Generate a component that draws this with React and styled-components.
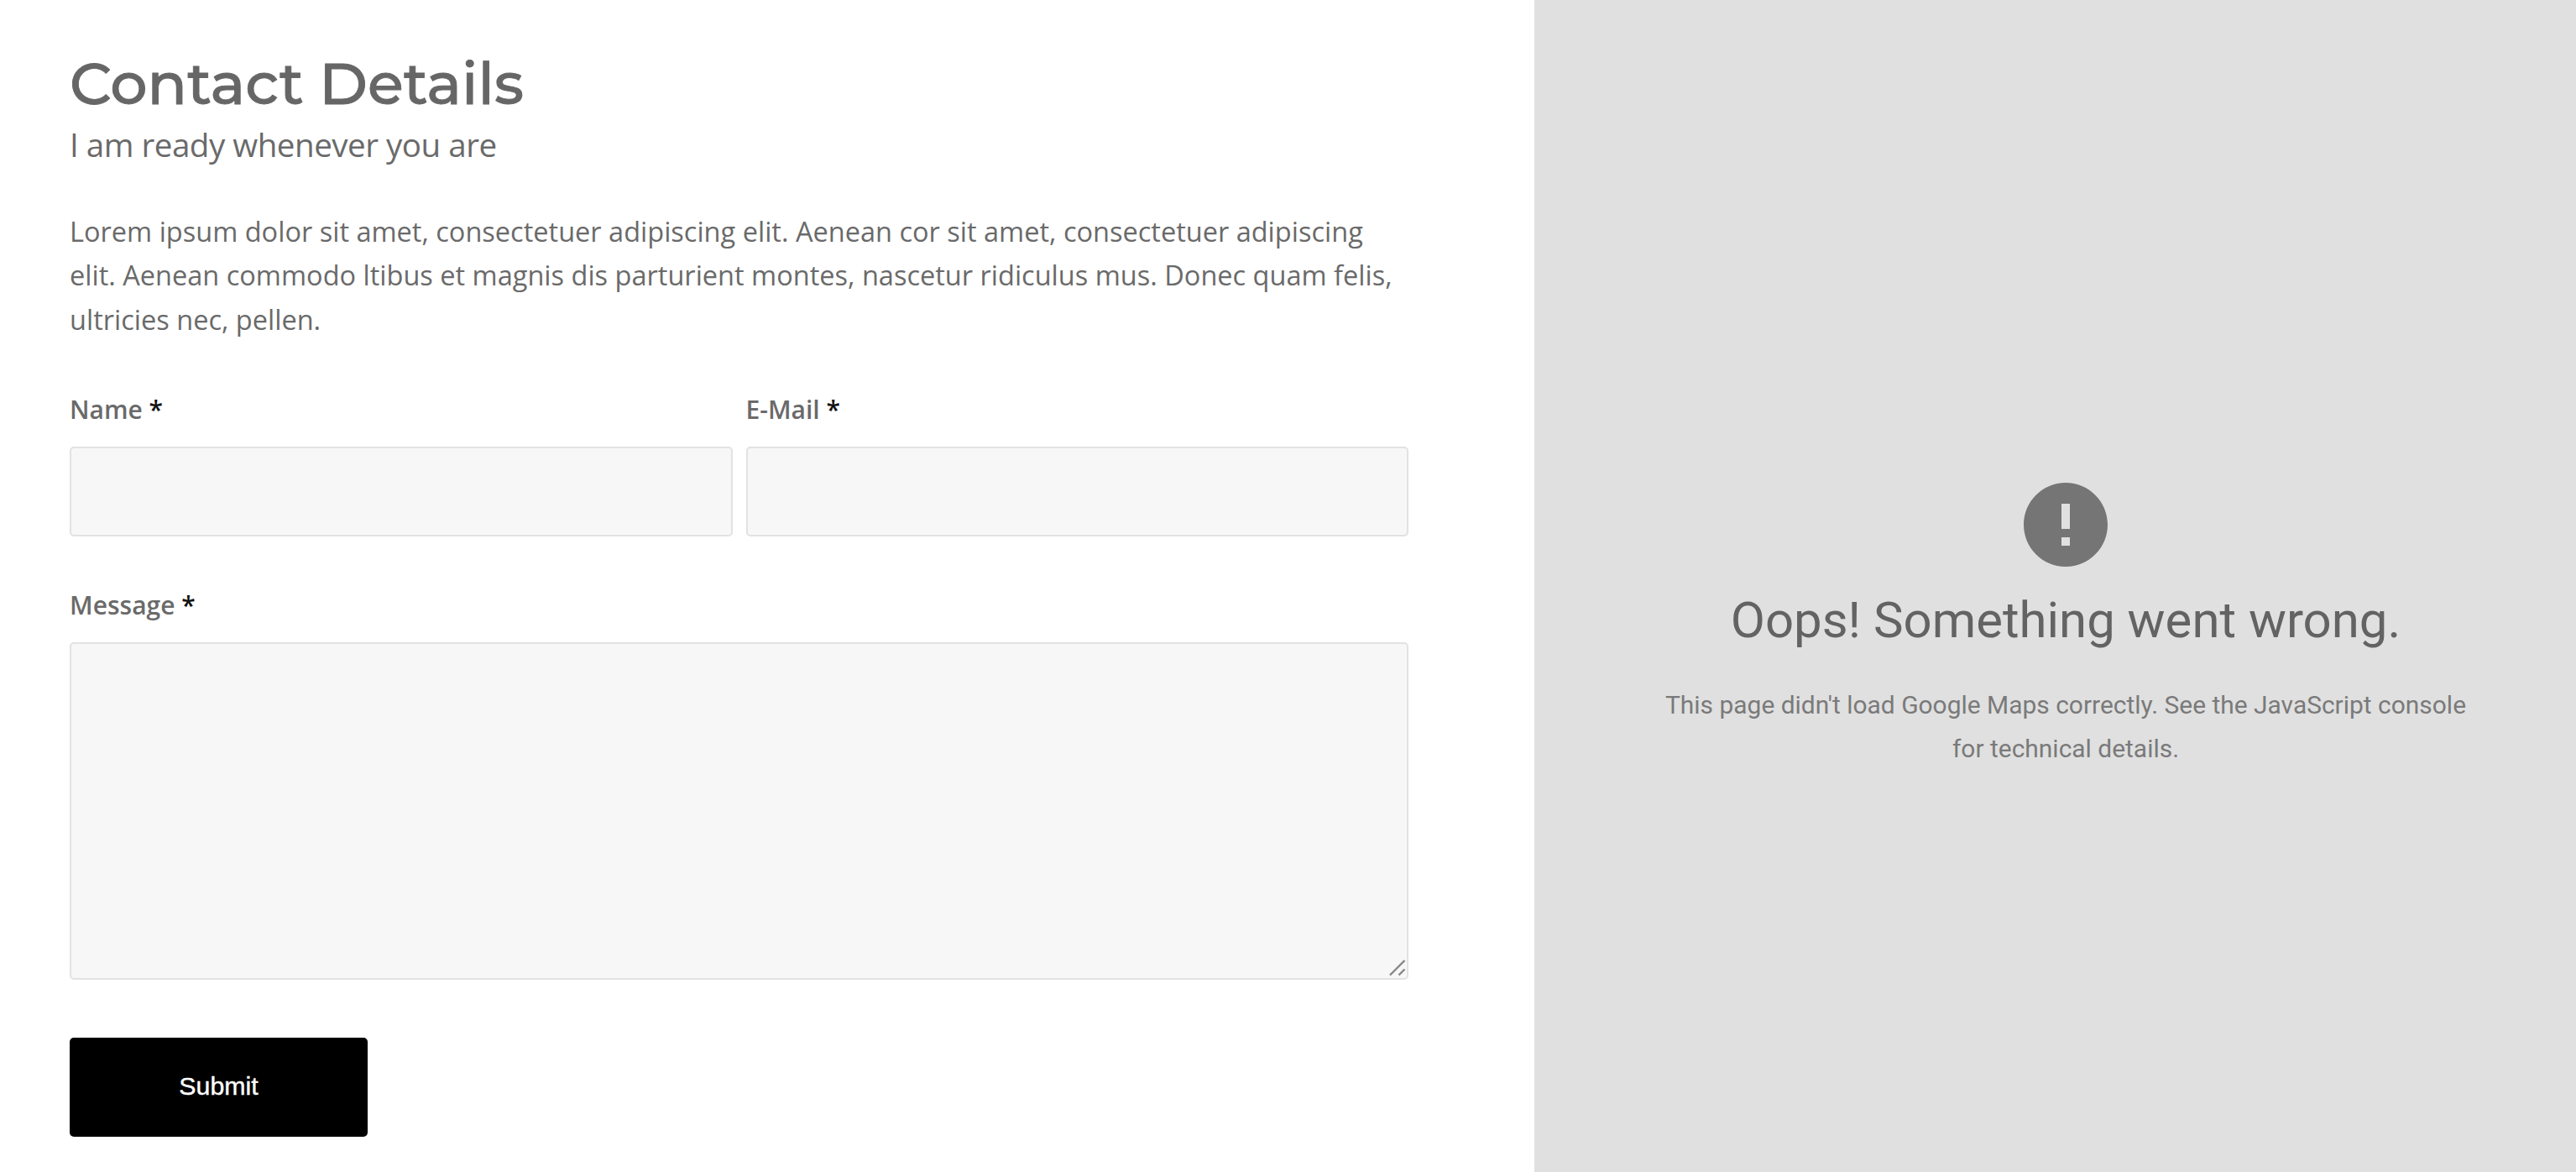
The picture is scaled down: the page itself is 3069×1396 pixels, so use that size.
import React from 'react'
import styled, { createGlobalStyle } from 'styled-components'
import { MdError } from 'react-icons/md'

const GlobalStyle = createGlobalStyle`
  * {
    box-sizing: border-box;
  }

  body {
    margin: 0;
    background: #ffffff;
    color: #6a6a6a;
    font-family: "Open Sans", sans-serif;
  }
`

const MainDiv = styled.div`
  display: flex;
  height: 1396px;
  overflow: hidden;
`

const Details = styled.section`
  width: 1828px;
  flex-shrink: 0;
  padding: 54px 150px 0 83px;
`

const Title = styled.h2`
  color: #666666;
  font-family: Montserrat, sans-serif;
  font-size: 69.8px;
  font-weight: 500;
  line-height: 90px;
  margin: 0;
  -webkit-text-stroke: .9px #666666;
`

const Subtitle = styled.p`
  font-size: 38.6px;
  letter-spacing: -.5px;
  line-height: 57px;
  margin: 0;
`

const Description = styled.p`
  font-size: 32.52px;
  line-height: 52.4px;
  margin: 49px 0 59px;
`

const Form = styled.form`
  display: grid;
  grid-template-columns: 1fr 1fr;
  gap: 60px 16px;
`

const Field = styled.label`
  display: flex;
  flex-direction: column;
  grid-column: ${({ $wide }) => ($wide ? '1 / -1' : 'auto')};
`

const Label = styled.span`
  font-size: 30px;
  font-weight: 600;
  line-height: 44px;
  margin-bottom: 22px;
`

const Required = styled.span`
  color: #111111;
`

const Input = styled.input`
  display: block;
  width: 100%;
  height: 107px;
  padding: 0 24px;
  background: #f7f7f7;
  border: 2px solid #e2e2e2;
  border-radius: 5px;
  font: inherit;
  font-size: 30px;
  outline: none;
`

const TextareaWrap = styled.span`
  display: block;
  position: relative;
`

const Textarea = styled(Input)`
  height: 402px;
  padding: 24px;
  resize: none;
`

const Grip = styled.svg`
  position: absolute;
  right: 3px;
  bottom: 4px;
  width: 20px;
  height: 20px;
`

const SubmitButton = styled.button`
  width: 355px;
  height: 118px;
  margin-top: 9px;
  padding: 0 0 3px;
  background: #000000;
  border: none;
  border-radius: 5px;
  color: #ffffff;
  font-family: "Liberation Sans", Arial, sans-serif;
  font-size: 30.3px;
  -webkit-text-stroke: .4px #ffffff;
`

const MapError = styled.section`
  flex: 1;
  display: flex;
  flex-direction: column;
  align-items: center;
  padding: 565px 0 0 25px;
  background: #e0e0e0;
  color: #7a7a7a;
  font-family: Roboto, sans-serif;
  text-align: center;
`

const ErrorIcon = styled(MdError)`
  width: 120px;
  height: 120px;
  color: #757575;
`

const ErrorTitle = styled.h3`
  color: #636363;
  font-size: 59.9px;
  font-weight: 400;
  line-height: 70px;
  margin: 19px 0 40px;
`

const ErrorText = styled.p`
  width: 980px;
  font-size: 29.95px;
  line-height: 52px;
  margin: 0;
`

export default function Contact() {
  return (
    <MainDiv>
      <GlobalStyle />

      <Details>
        <Title>Contact Details</Title>
        <Subtitle>I am ready whenever you are</Subtitle>
        <Description>
          Lorem ipsum dolor sit amet, consectetuer adipiscing elit. Aenean cor sit amet, consectetuer adipiscing elit. Aenean commodo ltibus et magnis dis parturient montes, nascetur ridiculus mus. Donec quam felis, ultricies nec, pellen.
        </Description>

        <Form>
          <Field>
            <Label>Name <Required>*</Required></Label>
            <Input type="text" />
          </Field>

          <Field>
            <Label>E-Mail <Required>*</Required></Label>
            <Input type="email" />
          </Field>

          <Field $wide>
            <Label>Message <Required>*</Required></Label>
            <TextareaWrap>
              <Textarea as="textarea" />
              <Grip viewBox="0 0 20 20" fill="none" stroke="#858585" strokeWidth="2.4">
                <path d="M1 18.5 L18.5 1 M11.5 18.5 L18.5 11.5" />
              </Grip>
            </TextareaWrap>
          </Field>

          <SubmitButton type="button">Submit</SubmitButton>
        </Form>
      </Details>

      <MapError>
        <ErrorIcon />
        <ErrorTitle>Oops! Something went wrong.</ErrorTitle>
        <ErrorText>
          This page didn't load Google Maps correctly. See the JavaScript console for technical details.
        </ErrorText>
      </MapError>
    </MainDiv>
  )
}
